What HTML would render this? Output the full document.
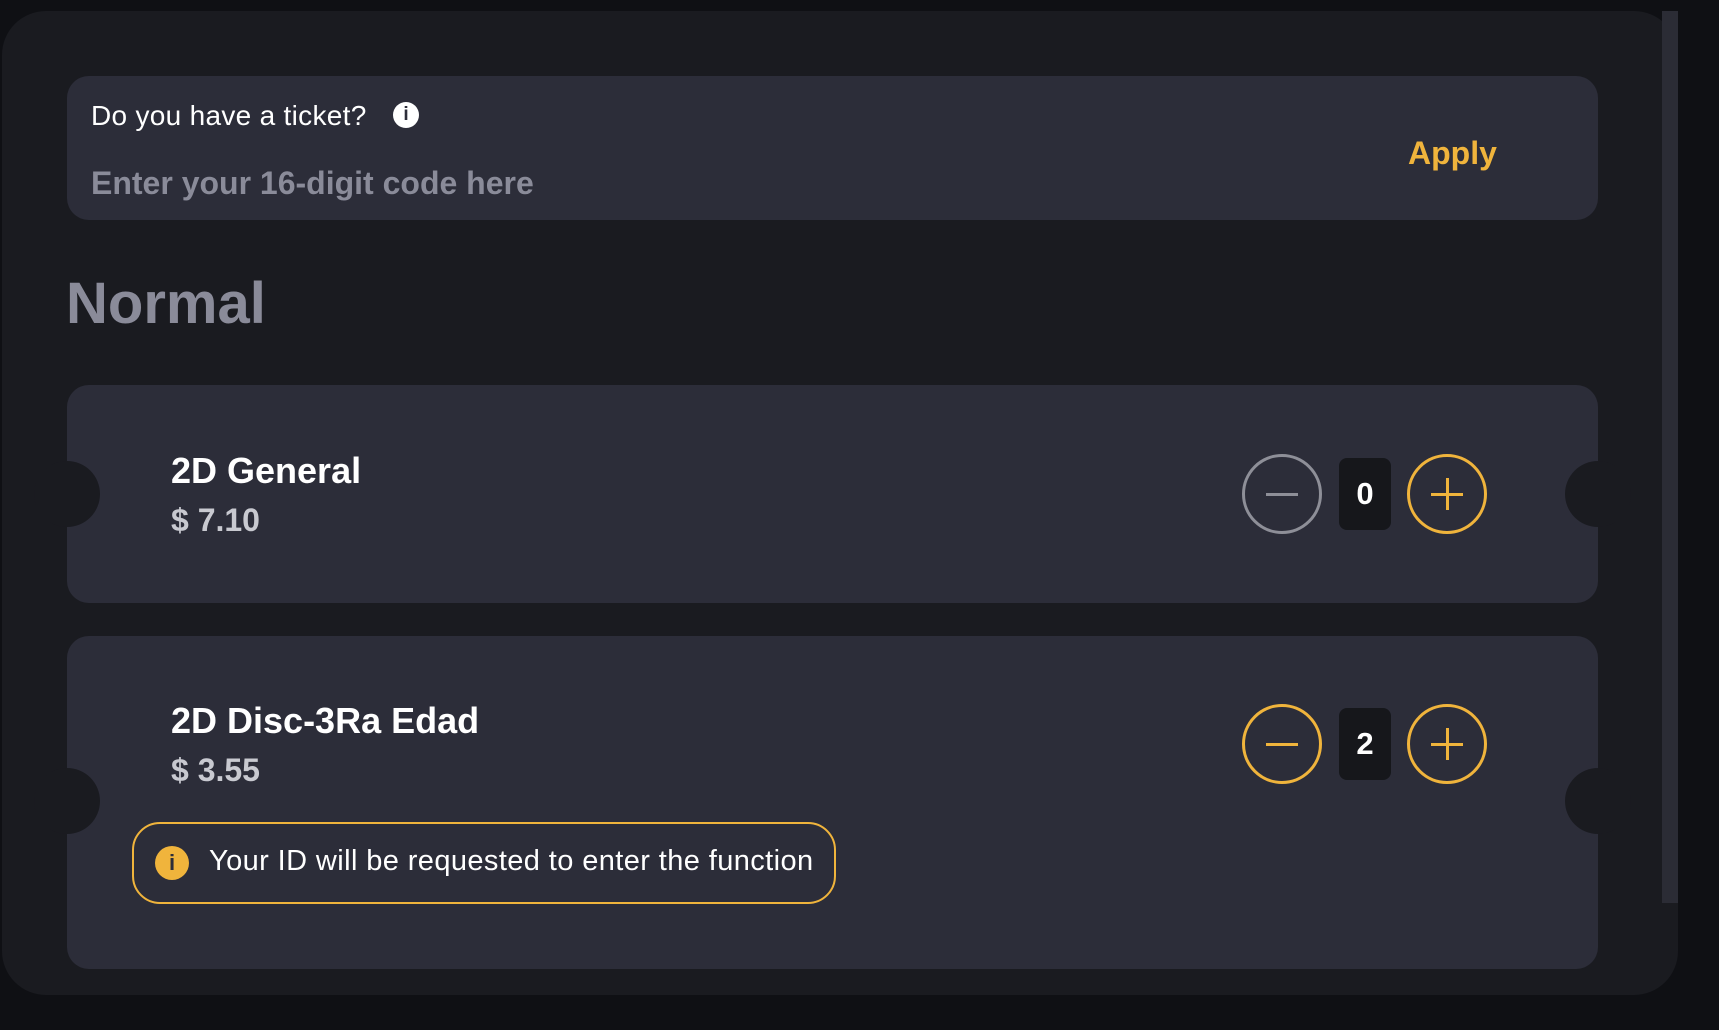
<!DOCTYPE html>
<html><head><meta charset="utf-8"><style>
*{margin:0;padding:0;box-sizing:border-box}
body{width:1719px;height:1030px;background:#0f1014;font-family:"Liberation Sans",sans-serif;position:relative;overflow:hidden}
.panel{position:absolute;left:2px;top:11px;width:1676px;height:984px;background:#1a1b20;border-radius:44px}
.scroll{position:absolute;left:1662px;top:11px;width:16px;height:892px;background:#2b2c35}
.abs{position:absolute;white-space:nowrap}
.box{position:absolute;background:#2c2d39;border-radius:22px}
.notch{position:absolute;width:66px;height:66px;border-radius:50%;background:#1a1b20}
.circ{position:absolute;width:80px;height:80px;border-radius:50%;border:3px solid #f0b43c}
.circ:before{content:"";position:absolute;left:21px;top:36px;width:32px;height:3px;background:#f0b43c}
.plus:after{content:"";position:absolute;left:36px;top:21px;width:3px;height:32px;background:#f0b43c}
.grey{border-color:#8e8f98}.grey:before{background:#8e8f98}
.cnt{position:absolute;width:52px;height:72px;background:#16171b;border-radius:8px;color:#fff;font-size:31px;font-weight:bold;text-align:center;line-height:72px}
.t{color:#fff;font-weight:bold;font-size:36px}
.p{color:#c8c9d0;font-weight:bold;font-size:32px}
</style></head><body>
<div class="panel"></div>
<div class="scroll"></div>

<div class="box" style="left:67px;top:76px;width:1531px;height:144px"></div>
<div class="abs" style="left:91px;top:100px;color:#fff;font-size:28px;letter-spacing:0.3px">Do you have a ticket?</div>
<div class="abs" style="left:393px;top:102px;width:26px;height:26px;border-radius:50%;background:#fff;color:#2c2d39;font-weight:bold;font-size:19px;text-align:center;line-height:26px">i</div>
<div class="abs" style="left:91px;top:165px;color:#8a8b99;font-size:32px;font-weight:bold">Enter your 16-digit code here</div>
<div class="abs" style="left:1408px;top:135px;color:#f0b43c;font-size:32px;font-weight:bold">Apply</div>

<div class="abs" style="left:66px;top:270px;color:#8a8b99;font-size:58px;font-weight:bold">Normal</div>

<div class="box" style="left:67px;top:385px;width:1531px;height:218px"></div>
<div class="notch" style="left:34px;top:461px"></div>
<div class="notch" style="left:1565px;top:461px"></div>
<div class="abs t" style="left:171px;top:450px">2D General</div>
<div class="abs p" style="left:171px;top:502px">$ 7.10</div>
<div class="circ grey" style="left:1242px;top:454px"></div>
<div class="cnt" style="left:1339px;top:458px">0</div>
<div class="circ plus" style="left:1407px;top:454px"></div>

<div class="box" style="left:67px;top:636px;width:1531px;height:333px"></div>
<div class="notch" style="left:34px;top:768px"></div>
<div class="notch" style="left:1565px;top:768px"></div>
<div class="abs t" style="left:171px;top:700px">2D Disc-3Ra Edad</div>
<div class="abs p" style="left:171px;top:752px">$ 3.55</div>
<div class="circ" style="left:1242px;top:704px"></div>
<div class="cnt" style="left:1339px;top:708px">2</div>
<div class="circ plus" style="left:1407px;top:704px"></div>

<div class="abs" style="left:132px;top:822px;width:704px;height:82px;border:2px solid #f0b43c;border-radius:28px"></div>
<div class="abs" style="left:155px;top:846px;width:34px;height:34px;border-radius:50%;background:#f0b43c;color:#2c2d39;font-weight:bold;font-size:22px;text-align:center;line-height:34px">i</div>
<div class="abs" style="left:209px;top:845px;color:#fff;font-size:29px;letter-spacing:0.4px">Your ID will be requested to enter the function</div>
</body></html>
